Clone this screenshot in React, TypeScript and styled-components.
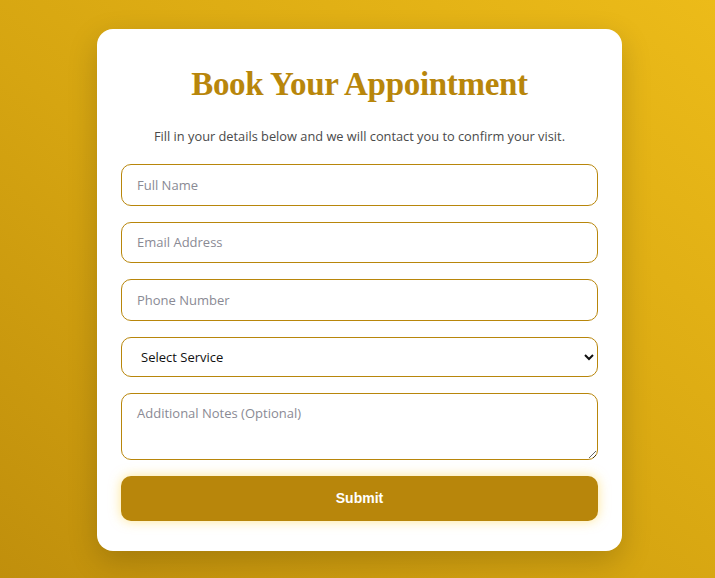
import * as React from 'react';
import styled, { createGlobalStyle } from 'styled-components';

const GOLD = '#b8860b';

const GlobalStyle = createGlobalStyle`
    html, body {
        margin: 0;
        padding: 0;
        height: 100%;
    }
    body {
        font-family: "Open Sans", "Noto Sans", sans-serif;
        background: linear-gradient(to top right, #c08f0c 0%, #d6a511 45%, #ecbb19 100%);
        min-height: 578px;
    }
`;

const Page = styled.div`
    display: flex;
    justify-content: center;
    padding: 29px 0 0 4px;
`;

const Card = styled.div`
    box-sizing: border-box;
    width: 525px;
    background: #ffffff;
    border-radius: 16px;
    padding: 36px 24px 30px;
    box-shadow: 0 10px 30px rgba(0, 0, 0, 0.18);
`;

const Title = styled.h2`
    margin: 0;
    text-align: center;
    font-family: "Liberation Serif", "DejaVu Serif", serif;
    font-weight: 700;
    font-size: 33px;
    line-height: 38px;
    letter-spacing: -0.3px;
    color: ${GOLD};
`;

const Subtitle = styled.p`
    margin: 23px 0 18px;
    text-align: center;
    font-size: 12.8px;
    line-height: 20px;
    color: #4a4a4a;
`;

const Form = styled.form`
    display: flex;
    flex-direction: column;
    gap: 16px;
`;

const fieldStyle = `
    box-sizing: border-box;
    width: 100%;
    border: 1px solid ${GOLD};
    border-radius: 10px;
    background: #ffffff;
    font-family: "Open Sans", "Noto Sans", sans-serif;
    font-size: 13px;
    color: #222;
    outline: none;
    &::placeholder {
        color: #8a8a94;
    }
`;

const Input = styled.input`
    ${fieldStyle}
    height: 41.5px;
    padding: 0 15px;
`;

const Select = styled.select`
    ${fieldStyle}
    height: 40px;
    padding: 0 15px;
    color: #111;
`;

const TextArea = styled.textarea`
    ${fieldStyle}
    height: 67px;
    padding: 10px 15px;
    resize: vertical;
`;

const SubmitButton = styled.button`
    height: 45px;
    border: 0;
    border-radius: 10px;
    background: ${GOLD};
    color: #ffffff;
    font-family: "Liberation Sans", Arial, sans-serif;
    font-weight: 700;
    font-size: 14px;
    box-shadow: 0 0 12px rgba(255, 210, 60, 0.55);
    cursor: pointer;
`;

const App: React.FC = () => (
    <>
        <GlobalStyle />
        <Page>
            <Card>
                <Title>Book Your Appointment</Title>
                <Subtitle>Fill in your details below and we will contact you to confirm your visit.</Subtitle>
                <Form onSubmit={e => e.preventDefault()}>
                    <Input type="text" placeholder="Full Name" />
                    <Input type="email" placeholder="Email Address" />
                    <Input type="tel" placeholder="Phone Number" />
                    <Select defaultValue="">
                        <option value="">Select Service</option>
                        <option value="consult">Consultation</option>
                        <option value="checkup">Check-up</option>
                    </Select>
                    <TextArea placeholder="Additional Notes (Optional)" />
                    <SubmitButton type="submit">Submit</SubmitButton>
                </Form>
            </Card>
        </Page>
    </>
);

export default App;
